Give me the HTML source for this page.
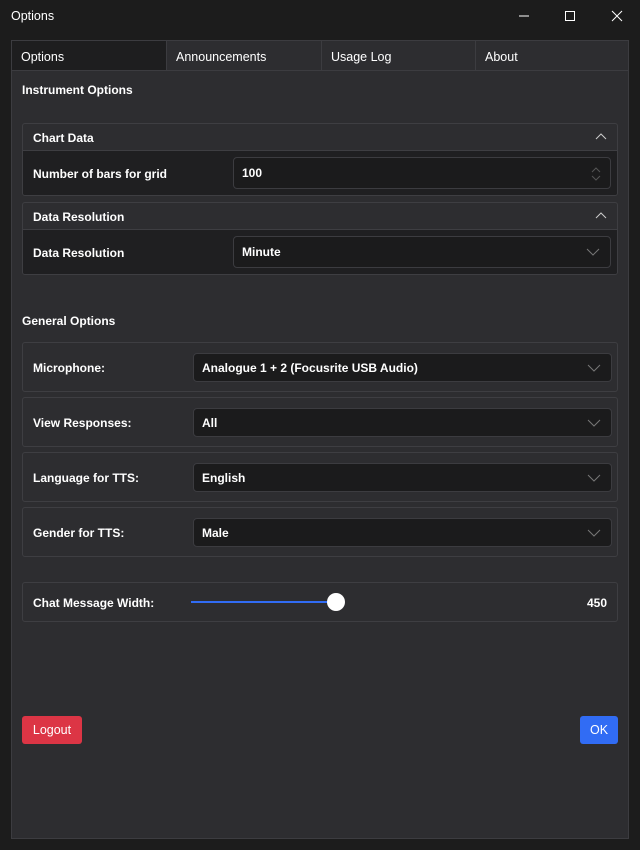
<!DOCTYPE html>
<html><head><style>
*{box-sizing:border-box;margin:0;padding:0}
body{width:640px;height:850px;background:#1c1c1c;font-family:"Liberation Sans",sans-serif;color:#fff;position:relative;overflow:hidden;font-size:12px}
.a{position:absolute}
.b{font-weight:bold}
.tab{position:absolute;top:40px;height:31px;border:1px solid #3c3c40;background:#2d2d30;padding:9px 9px;font-size:12.5px}
.grp{position:absolute;left:22px;width:596px;border:1px solid #3e3e42;border-radius:3px;overflow:hidden;background:#2d2d30}
.gh{height:27px;padding:7px 10px;font-weight:bold;border-bottom:1px solid #3e3e42;position:relative}
.gb{background:#1f1f21;position:relative}
.inp{position:absolute;background:#1b1b1c;border:1px solid #3c3c40;border-radius:4px;padding:8px 8px;font-weight:bold}
.row{position:absolute;left:22px;width:596px;border:1px solid #3e3e42;border-radius:3px;background:#2d2d30}
.lbl{position:absolute;left:10px;font-weight:bold}
.chev{position:absolute;right:10px;top:50%;margin-top:-5px}
</style></head><body>
<div class="a" style="left:11px;top:9px;font-size:12.5px">Options</div>
<svg class="a" style="left:510px;top:8px" width="120" height="16"><line x1="9" y1="8" x2="19" y2="8" stroke="#fff"/><rect x="55.5" y="3.5" width="9" height="9" fill="none" stroke="#fff"/><path d="M102 3l10 10M112 3l-10 10" stroke="#fff"/></svg>
<div class="a" style="left:11px;top:40px;width:618px;height:799px;background:#2d2d30;border:1px solid #3c3c40"></div>
<div class="tab" style="left:11px;width:156px;background:#1e1e1f">Options</div>
<div class="tab" style="left:166px;width:156px">Announcements</div>
<div class="tab" style="left:321px;width:155px">Usage Log</div>
<div class="tab" style="left:475px;width:154px">About</div>
<div class="a b" style="left:22px;top:83px">Instrument Options</div>
<div class="grp" style="top:123px;height:73px">
<div class="gh">Chart Data<svg class="a" style="right:10px;top:8px" width="12" height="8"><path d="M1 7l5-5 5 5" stroke="#ccc" fill="none"/></svg></div>
<div class="gb" style="height:45px"><div class="lbl" style="top:16px">Number of bars for grid</div>
<div class="inp" style="left:210px;top:6px;width:378px;height:32px">100<svg class="a" style="right:8px;top:8px" width="12" height="16"><path d="M2 6l4-4 4 4M2 10l4 4 4-4" stroke="#555" fill="none"/></svg></div></div>
</div>
<div class="grp" style="top:202px;height:73px">
<div class="gh">Data Resolution<svg class="a" style="right:10px;top:8px" width="12" height="8"><path d="M1 7l5-5 5 5" stroke="#ccc" fill="none"/></svg></div>
<div class="gb" style="height:45px"><div class="lbl" style="top:16px">Data Resolution</div>
<div class="inp" style="left:210px;top:6px;width:378px;height:32px">Minute<svg class="chev" width="14" height="9"><path d="M1 2l6 6 6-6" stroke="#777" fill="none"/></svg></div></div>
</div>
<div class="a b" style="left:22px;top:314px">General Options</div>
<div class="row" style="top:342px;height:50px"><div class="lbl" style="top:18px">Microphone:</div><div class="inp" style="left:170px;top:10px;width:419px;height:29px;padding:7px 8px">Analogue 1 + 2 (Focusrite USB Audio)<svg class="chev" width="14" height="9"><path d="M1 2l6 6 6-6" stroke="#777" fill="none"/></svg></div></div>
<div class="row" style="top:397px;height:50px"><div class="lbl" style="top:18px">View Responses:</div><div class="inp" style="left:170px;top:10px;width:419px;height:29px;padding:7px 8px">All<svg class="chev" width="14" height="9"><path d="M1 2l6 6 6-6" stroke="#777" fill="none"/></svg></div></div>
<div class="row" style="top:452px;height:50px"><div class="lbl" style="top:18px">Language for TTS:</div><div class="inp" style="left:170px;top:10px;width:419px;height:29px;padding:7px 8px">English<svg class="chev" width="14" height="9"><path d="M1 2l6 6 6-6" stroke="#777" fill="none"/></svg></div></div>
<div class="row" style="top:507px;height:50px"><div class="lbl" style="top:18px">Gender for TTS:</div><div class="inp" style="left:170px;top:10px;width:419px;height:29px;padding:7px 8px">Male<svg class="chev" width="14" height="9"><path d="M1 2l6 6 6-6" stroke="#777" fill="none"/></svg></div></div>
<div class="row" style="top:582px;height:40px"><div class="lbl" style="top:13px">Chat Message Width:</div>
<div class="a" style="left:168px;top:18px;width:145px;height:2px;background:#316cf4"></div>
<div class="a" style="left:304px;top:10px;width:18px;height:18px;border-radius:50%;background:#fff"></div>
<div class="a b" style="right:10px;top:13px">450</div></div>
<div class="a" style="left:22px;top:716px;width:60px;height:28px;background:#dc3545;border-radius:3px;text-align:center;line-height:28px;font-size:12.5px">Logout</div>
<div class="a" style="left:580px;top:716px;width:38px;height:28px;background:#316cf4;border-radius:3px;text-align:center;line-height:28px;font-size:12.5px">OK</div>
</body></html>
